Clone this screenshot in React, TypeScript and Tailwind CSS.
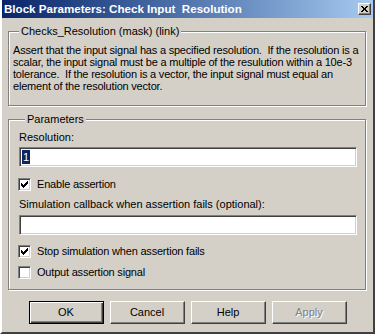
import React from 'react';

// Classic Win2000 bevels
const raised =
    'border border-t-white border-l-white border-r-[#404040] border-b-[#404040] shadow-[inset_-1px_-1px_0_#808080]';
const sunken =
    'border border-t-[#808080] border-l-[#808080] border-r-white border-b-white shadow-[inset_1px_1px_0_#404040,inset_-1px_-1px_0_#d4d0c8]';
const etched = 'border border-[#808080] shadow-[inset_1px_1px_0_#fff,1px_1px_0_#fff]';

const checkPixels: [number, number][] = [
    [1, 3], [2, 4], [3, 5], [4, 4], [5, 3], [6, 2], [7, 1],
];

function Checkbox({ checked, label }: { checked: boolean; label: string }) {
    return (
        <div className="flex items-center h-[13px] -ml-[1px]">
            <div className={`w-[13px] h-[13px] bg-white ${sunken} flex items-center justify-center`}>
                {checked && (
                    <svg width="9" height="9" viewBox="0 0 9 9" shapeRendering="crispEdges">
                        {checkPixels.map(([x, y]) => (
                            <rect key={x} x={x} y={y} width="1" height="3" fill="#000" />
                        ))}
                    </svg>
                )}
            </div>
            <span className="ml-[6px] leading-[13px] tracking-[-0.2px]">{label}</span>
        </div>
    );
}

function GroupBox({ title, className, children }: { title: string; className?: string; children: React.ReactNode }) {
    return (
        <div className={`${etched} flex flex-col ${className ?? ''}`}>
            <span className="self-start -mt-[7px] ml-[6px] px-[2px] h-[13px] leading-[13px] bg-[#d4d0c8]">{title}</span>
            {children}
        </div>
    );
}

function Button({ label, primary, disabled }: { label: string; primary?: boolean; disabled?: boolean }) {
    const bevel = primary
        ? 'border border-black shadow-[inset_1px_1px_0_#fff,inset_-1px_-1px_0_#404040,inset_-2px_-2px_0_#808080]'
        : raised;
    return (
        <div className={`w-[75px] h-[23px] flex items-center justify-center ${bevel}`}>
            <span className={disabled ? 'text-[#808080] [text-shadow:1px_1px_0_#fff]' : ''}>{label}</span>
        </div>
    );
}

export default function App() {
    return (
        <div className="w-[375px] h-[334px] bg-[#d4d0c8] flex flex-col text-[11px] text-black font-['Liberation_Sans',Arial,sans-serif] border-l-2 border-r-2 border-b-2 border-l-white border-r-[#404040] border-b-[#404040]">
            {/* Title bar */}
            <div className="h-[18px] flex items-center bg-linear-to-r from-[#0a246a] to-[#a6caf0] pl-[2px] pr-[2px]">
                <span className="flex-1 text-white font-bold text-[11.6px] whitespace-pre leading-[18px]">Block Parameters: Check Input  Resolution</span>
                <div className={`w-[13px] h-[12px] bg-[#d4d0c8] ${raised} flex items-center justify-center`}>
                    <svg width="7" height="6" viewBox="0 0 7 6" shapeRendering="crispEdges">
                        <path d="M0 0h2v1h-2zM5 0h2v1h-2zM1 1h2v1h-2zM4 1h2v1h-2zM2 2h3v2h-3zM1 4h2v1h-2zM4 4h2v1h-2zM0 5h2v1h-2zM5 5h2v1h-2z" fill="#000" />
                    </svg>
                </div>
            </div>

            {/* Body */}
            <div className="flex flex-col pl-[6px] pr-[7px]">
                <GroupBox title="Checks_Resolution (mask) (link)" className="mt-[13px] pl-[4px] pb-[13px]">
                    <div className="mt-[6px] leading-[12px] whitespace-pre tracking-[-0.2px]">
                        <div>Assert that the input signal has a specified resolution.  If the resolution is a</div>
                        <div>scalar, the input signal must be a multiple of the resulution within a 10e-3</div>
                        <div>tolerance.  If the resolution is a vector, the input signal must equal an</div>
                        <div>element of the resolution vector.</div>
                    </div>
                </GroupBox>

                <GroupBox title="Parameters" className="mt-[13px] pl-[10px] pr-[8px] pb-[10px]">
                    <div className="mt-[5px] h-[13px] leading-[13px]">Resolution:</div>
                    <div className={`mt-[3px] h-[20px] bg-white ${sunken} flex items-center pl-[2px]`}>
                        <span className="bg-[#0a246a] text-white leading-[14px] px-[1px]">1</span>
                    </div>
                    <div className="mt-[11px]">
                        <Checkbox checked label="Enable assertion" />
                    </div>
                    <div className="mt-[7px] h-[13px] leading-[13px]">Simulation callback when assertion fails (optional):</div>
                    <div className={`mt-[4px] h-[20px] bg-white ${sunken}`} />
                    <div className="mt-[10px]">
                        <Checkbox checked label="Stop simulation when assertion fails" />
                    </div>
                    <div className="mt-[8px]">
                        <Checkbox checked={false} label="Output assertion signal" />
                    </div>
                </GroupBox>

                <div className="mt-[11px] flex justify-center gap-[6px] pl-[1px]">
                    <Button label="OK" primary />
                    <Button label="Cancel" />
                    <Button label="Help" />
                    <Button label="Apply" disabled />
                </div>
            </div>
        </div>
    );
}
